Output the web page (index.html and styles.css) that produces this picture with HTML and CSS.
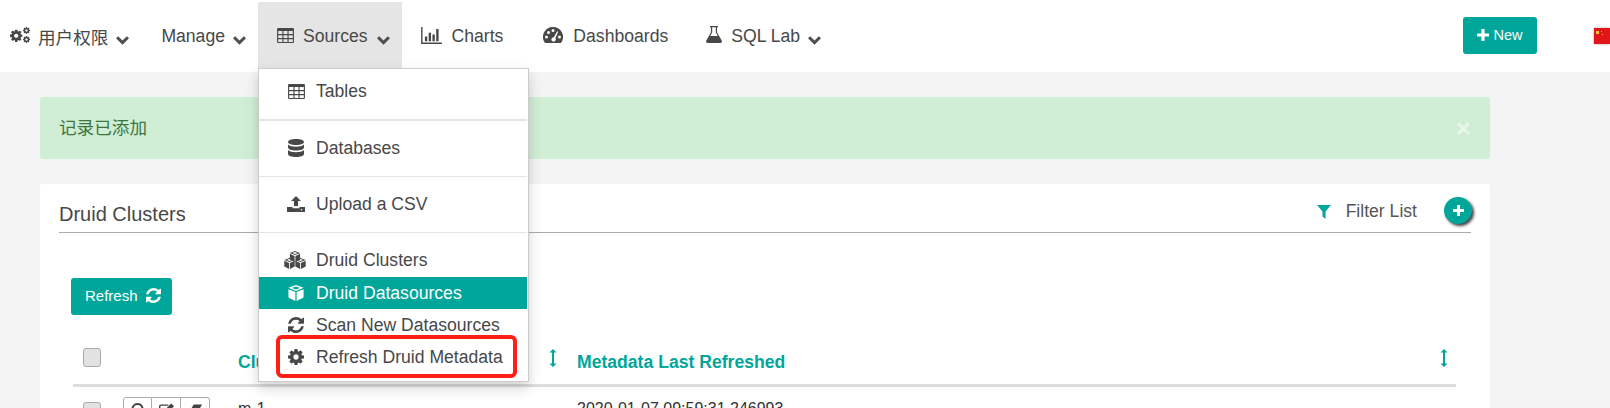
FILE: index.html
```html
<!DOCTYPE html>
<html lang="zh">
<head>
<meta charset="utf-8">
<title>Druid Clusters</title>
<link rel="stylesheet" href="styles.css">
</head>
<body>
<svg class="sprite" xmlns="http://www.w3.org/2000/svg">
  <defs>
    <symbol id="i-cog" viewBox="128 128 1536 1536"><path d="M1152 896q0-106-75-181t-181-75-181 75-75 181 75 181 181 75 181-75 75-181zm512-109v222q0 12-8 23t-20 13l-185 28q-19 54-39 91 35 50 107 138 10 12 10 25t-9 23q-27 37-99 108t-94 71q-12 0-26-9l-138-108q-44 23-91 38-16 136-29 186-7 28-36 28h-222q-14 0-24.5-8.5t-11.5-21.5l-28-184q-49-16-90-37l-141 107q-10 9-25 9-14 0-25-11-126-114-165-168-7-10-7-23 0-12 8-23 15-21 51-66.5t54-70.5q-27-50-41-99l-183-27q-13-2-21-12.5t-8-23.5v-222q0-12 8-23t19-13l186-28q14-46 39-92-40-57-107-138-10-12-10-24 0-10 9-23 26-36 98.5-107.5t94.5-71.5q13 0 26 10l138 107q44-23 91-38 16-136 29-186 7-28 36-28h222q14 0 24.5 8.5t11.5 21.5l28 184q49 16 90 37l142-107q9-9 24-9 13 0 25 10 129 119 165 170 7 8 7 22 0 12-8 23-15 21-51 66.5t-54 70.5q26 50 41 98l183 28q13 2 21 12.5t8 23.5z"/></symbol>
    <symbol id="i-cogs" viewBox="0 0 20 16">
      <use href="#i-cog" x="0" y="2.500" width="12.500" height="12.500"/>
      <use href="#i-cog" x="13" y="0" width="7" height="7"/>
      <use href="#i-cog" x="13" y="9" width="7" height="7"/>
    </symbol>
    <symbol id="i-refresh" viewBox="128 128 1536 1536"><path d="M1639 1056q0 5-1 7-64 268-268 434.5t-478 166.5q-146 0-282.5-55t-243.5-157l-129 129q-19 19-45 19t-45-19-19-45v-448q0-26 19-45t45-19h448q26 0 45 19t19 45-19 45l-137 137q71 66 161 102t187 36q134 0 250-65t186-179q11-17 53-117 8-23 30-23h192q13 0 22.5 9.500t9.500 22.500zm25-800v448q0 26-19 45t-45 19h-448q-26 0-45-19t-19-45 19-45l138-138q-148-137-349-137-134 0-250 65t-186 179q-11 17-53 117-8 23-30 23h-199q-13 0-22.500-9.500t-9.500-22.500v-7q65-268 270-434.500t480-166.500q146 0 284 55.500t245 156.500l130-129q19-19 45-19t45 19 19 45z"/></symbol>
    <symbol id="i-table" viewBox="0 0 18 16"><path fill-rule="evenodd" d="M1.200 0h15.600A1.200 1.200 0 0 1 18 1.200v13.600a1.200 1.200 0 0 1-1.200 1.200H1.200A1.200 1.200 0 0 1 0 14.800V1.200A1.200 1.200 0 0 1 1.200 0zM1.200 3.200v3.200h4.500V3.200zm5.700 0v3.200h4.200V3.200zm5.400 0v3.200h4.500V3.200zM1.200 7.600v3.100h4.500V7.600zm5.700 0v3.100h4.200V7.600zm5.400 0v3.100h4.500V7.600zM1.200 11.900v2.900h4.500v-2.900zm5.700 0v2.900h4.200v-2.900zm5.400 0v2.900h4.500v-2.900z"/></symbol>
    <symbol id="i-chart" viewBox="0 0 22 18"><path d="M0 0h1.500v16.500H22V18H0zM4 10h2.500v5H4zM8 6h2.500v9H8zM12 8h2.500v7H12zM16 2h2.500v13H16z"/></symbol>
    <symbol id="i-dash" viewBox="0 0 20 18"><path fill-rule="evenodd" d="M10 1a10 10 0 0 1 8.600 15.100 1.500 1.500 0 0 1-1.300.9H2.700a1.500 1.500 0 0 1-1.300-.9A10 10 0 0 1 10 1zM10 3a1.500 1.500 0 1 0 0 3 1.500 1.500 0 0 0 0-3zM5.500 5a1.500 1.500 0 1 0 0 3 1.500 1.500 0 0 0 0-3zM3.500 9.500a1.500 1.500 0 1 0 0 3 1.500 1.500 0 0 0 0-3zM16.500 9.500a1.500 1.500 0 1 0 0 3 1.500 1.500 0 0 0 0-3zM14.200 5.300l-3.300 6a2.200 2.200 0 1 0 1.500.9l2.800-6.400z"/></symbol>
    <symbol id="i-flask" viewBox="0 0 16 17"><path fill-rule="evenodd" d="M4 0h8v1.200h-1v5L15.700 14.500A1.700 1.700 0 0 1 14.200 17H1.800A1.700 1.700 0 0 1 .3 14.500L5 6.200v-5H4zM6.200 1.200v5.300L4.200 10h7.600L9.800 6.500V1.200z"/></symbol>
    <symbol id="i-db" viewBox="0 0 16 18"><path d="M8 0c4.400 0 8 1.300 8 3s-3.600 3-8 3-8-1.300-8-3 3.600-3 8-3zM0 5.500C1.500 7 4.600 7.700 8 7.700s6.500-.7 8-2.200V8.500c0 1.700-3.600 3-8 3s-8-1.300-8-3zM0 11c1.500 1.500 4.600 2.200 8 2.200s6.500-.7 8-2.200v4c0 1.700-3.600 3-8 3s-8-1.300-8-3z"/></symbol>
    <symbol id="i-upload" viewBox="0 0 18 16"><path fill-rule="evenodd" d="M9 0l5 5h-3v5H7V5H4zM0 11h5.500v1.200h7V11H18v5H0zM14.500 13a.8.800 0 1 0 0 1.600.8.800 0 0 0 0-1.600z"/></symbol>
    <symbol id="i-cube" viewBox="0 0 18 18"><path fill-rule="evenodd" d="M9 0l8.500 3.200L9 6.700.5 3.200zM9 1.800L4.500 3.300 9 5l4.500-1.700zM.5 4.700L8.300 8v10L.5 14zM17.500 4.700V14l-7.800 4V8z"/></symbol>
    <symbol id="i-cubes" viewBox="0 0 22 18">
      <use href="#i-cube" x="5.500" y="0" width="11" height="11"/>
      <use href="#i-cube" x="0" y="7" width="11" height="11"/>
      <use href="#i-cube" x="11" y="7" width="11" height="11"/>
    </symbol>
    <symbol id="i-filter" viewBox="0 0 14 14"><path d="M0 0h14L8.500 6.500V14L5.500 11.500V6.500z"/></symbol>
    <symbol id="i-plus" viewBox="0 0 12 12"><path d="M4.400 0h3.200v4.400H12v3.200H7.600V12H4.400V7.600H0V4.400h4.400z"/></symbol>
    <symbol id="i-chev" viewBox="0 0 12 8"><path d="M0 2L2 0l4 4 4-4 2 2-6 6z"/></symbol>
    <symbol id="i-sort" viewBox="0 0 8 18"><path d="M4 0l3.500 3.500H5v11h2.500L4 18 .5 14.500H3v-11H.5z"/></symbol>
    <symbol id="i-times" viewBox="0 0 14 14"><path d="M2.500 0L7 4.500 11.500 0 14 2.500 9.500 7l4.500 4.500-2.500 2.500L7 9.500 2.500 14 0 11.500 4.500 7 0 2.500z"/></symbol>
    <symbol id="i-search" viewBox="0 0 14 14"><path fill-rule="evenodd" d="M6 0a6 6 0 0 1 4.800 9.600L14 12.800 12.800 14 9.600 10.800A6 6 0 1 1 6 0zM6 2a4 4 0 1 0 0 8 4 4 0 0 0 0-8z"/></symbol>
    <symbol id="i-edit" viewBox="0 0 16 14"><path fill-rule="evenodd" d="M2 1h8v1.500H2a.5.500 0 0 0-.5.500v8a.5.500 0 0 0 .5.500h8a.5.500 0 0 0 .5-.5V8H12v3a2 2 0 0 1-2 2H2a2 2 0 0 1-2-2V3a2 2 0 0 1 2-2zM13 0l3 3-7 7H6V7z"/></symbol>
    <symbol id="i-eraser" viewBox="0 0 16 14"><path d="M6 1h9l-5 9H1z"/></symbol>
  </defs>
</svg>

<nav class="navbar">
  <div class="nav-item nav-item-first"><svg class="icon icon-cogs"><use href="#i-cogs"/></svg><span class="nav-label nav-label-first">用户权限</span><svg class="chev chev-tight"><use href="#i-chev"/></svg></div>
  <div class="nav-item nav-item-narrow"><span>Manage</span><svg class="chev chev-tight"><use href="#i-chev"/></svg></div>
  <div class="nav-item nav-item-active nav-item-narrow"><svg class="icon nav-icon-table"><use href="#i-table"/></svg><span class="nav-label">Sources</span><svg class="chev"><use href="#i-chev"/></svg></div>
  <div class="nav-item nav-item-plain"><svg class="icon nav-icon-chart"><use href="#i-chart"/></svg><span class="nav-label nav-label-wide">Charts</span></div>
  <div class="nav-item nav-item-dash"><svg class="icon nav-icon-dash"><use href="#i-dash"/></svg><span class="nav-label nav-label-wide">Dashboards</span></div>
  <div class="nav-item nav-item-sql"><svg class="icon nav-icon-flask"><use href="#i-flask"/></svg><span class="nav-label">SQL Lab</span><svg class="chev chev-tight"><use href="#i-chev"/></svg></div>
  <div class="nav-right">
    <button class="btn btn-new"><svg class="icon-plus-new"><use href="#i-plus"/></svg>New</button>
    <div class="flag"><span class="flag-star"></span></div>
  </div>
</nav>

<div class="dropdown">
  <div class="menu-item"><svg class="menu-icon menu-icon-table"><use href="#i-table"/></svg>Tables</div>
  <div class="divider divider-thick"></div>
  <div class="menu-item"><svg class="menu-icon menu-icon-db"><use href="#i-db"/></svg>Databases</div>
  <div class="divider"></div>
  <div class="menu-item"><svg class="menu-icon menu-icon-offset"><use href="#i-upload"/></svg>Upload a CSV</div>
  <div class="divider"></div>
  <div class="menu-item menu-item-spaced"><svg class="menu-icon menu-icon-wide"><use href="#i-cubes"/></svg>Druid Clusters</div>
  <div class="menu-item menu-item-active"><svg class="menu-icon menu-icon-offset"><use href="#i-cube"/></svg>Druid Datasources</div>
  <div class="menu-item"><svg class="menu-icon menu-icon-offset"><use href="#i-refresh"/></svg>Scan New Datasources</div>
  <div class="menu-item"><svg class="menu-icon menu-icon-offset"><use href="#i-cog"/></svg>Refresh Druid Metadata</div>
  <div class="annotation"></div>
</div>

<main class="main">
  <div class="alert">
    <span class="alert-text">记录已添加</span>
    <svg class="alert-close"><use href="#i-times"/></svg>
  </div>
  <section class="card">
    <header class="card-head">
      <h2 class="card-title">Druid Clusters</h2>
      <div class="card-tools">
        <svg class="filter-icon"><use href="#i-filter"/></svg>
        <span class="filter-label">Filter List</span>
        <span class="fab"><svg class="fab-plus"><use href="#i-plus"/></svg></span>
      </div>
    </header>
    <button class="btn btn-refresh">Refresh<svg class="refresh-icon"><use href="#i-refresh"/></svg></button>
    <div class="list">
      <div class="row row-head">
        <span class="checkbox"></span>
        <span></span>
        <span class="col-head col-head-cluster">Cluster<svg class="sort"><use href="#i-sort"/></svg></span>
        <span class="col-head">Metadata Last Refreshed<svg class="sort"><use href="#i-sort"/></svg></span>
      </div>
      <div class="row row-body">
        <span class="checkbox"></span>
        <span class="actions">
          <span class="action"><svg class="action-icon"><use href="#i-search"/></svg></span>
          <span class="action"><svg class="action-icon"><use href="#i-edit"/></svg></span>
          <span class="action"><svg class="action-icon"><use href="#i-eraser"/></svg></span>
        </span>
        <span class="cell">m-1</span>
        <span class="cell">2020-01-07 09:59:31.246993</span>
      </div>
    </div>
  </section>
</main>
</body>
</html>
```
FILE: styles.css
```css
* { box-sizing: border-box; }
html, body { margin: 0; height: 408px; overflow: hidden; }
body {
  position: relative;
  background: #f4f4f4;
  color: #484848;
  font-family: "Liberation Sans", "Noto Sans CJK SC", sans-serif;
  font-size: 17.6px;
}
.sprite { position: absolute; width: 0; height: 0; }
svg { fill: currentColor; display: block; flex: none; }

/* nav */
.navbar {
  display: flex;
  align-items: stretch;
  height: 72px;
  background: #fff;
  padding-top: 2px;
}
.nav-item {
  display: flex;
  align-items: center;
  height: 66px;
  padding: 2px 13px 0 19px;
  white-space: nowrap;
}
.nav-item-first { padding-left: 10px; }
.nav-item-narrow { padding-right: 12px; }
.nav-item-active { background: #e5e5e5; }
.nav-item-plain { padding-right: 13px; }
.nav-item-dash { padding-left: 27px; }
.nav-item-sql { padding-left: 25px; }
.nav-label { margin-left: 9px; }
.nav-label-first { margin-left: 8px; }
.nav-label-wide { margin-left: 10px; }
.icon { color: #484848; }
.icon-cogs { width: 20px; height: 16px; margin-top: -2px; }
.nav-icon-table { width: 17px; height: 15px; margin-top: -2px; }
.nav-icon-chart { width: 21px; height: 17px; margin-top: -2px; }
.nav-icon-dash { width: 20px; height: 18px; margin-top: -2px; }
.nav-icon-flask { width: 16px; height: 17px; margin-top: -3px; }
.chev { width: 13px; height: 9px; margin: 8px 0 0 9px; color: #4f4f4f; }
.chev-tight { margin-left: 8px; }
.nav-right {
  margin-left: auto;
  display: flex;
  align-items: flex-start;
  padding-top: 15px;
  width: 147px;
  flex: none;
}
.btn {
  display: flex;
  align-items: center;
  border: 0;
  border-radius: 3px;
  background: #00a699;
  color: #fff;
  font-family: inherit;
}
.btn-new {
  width: 74px;
  height: 37px;
  justify-content: center;
  padding-bottom: 2px;
  font-size: 14.5px;
}
.icon-plus-new { width: 12px; height: 12px; margin-right: 4px; }
.flag {
  margin: 11px 0 0 57px;
  width: 16px;
  height: 16px;
  flex: none;
  background: #e0161b;
  box-shadow: 0 0 2px rgba(0,0,0,.4);
  position: relative;
}
.flag-star {
  display: block;
  position: absolute;
  left: 2px;
  top: 3px;
  width: 3px;
  height: 3px;
  background: #f2c230;
  box-shadow: 4px -1px 0 -1px #f2c230, 5px 2px 0 -1px #f2c230;
}

/* dropdown */
.dropdown {
  position: absolute;
  left: 258px;
  top: 68px;
  width: 271px;
  height: 314px;
  padding: 6px 1px 5px 0;
  background: #fff;
  border: 1px solid #ccc;
  box-shadow: 0 6px 12px rgba(0,0,0,.175);
  z-index: 5;
}
.menu-item {
  display: flex;
  align-items: center;
  height: 32px;
  padding-left: 27px;
  color: #484848;
  white-space: nowrap;
}
.menu-item-spaced { margin-bottom: 1px; }
.menu-item-active { background: #00a699; color: #fff; }
.menu-icon { width: 18px; height: 16px; margin-right: 12px; }
.menu-icon-offset { margin: 0 11px 0 1px; }
.menu-icon-table { width: 17px; height: 15px; margin: 0 11px 0 2px; }
.menu-icon-db { width: 16px; height: 18px; margin: 0 12px 0 2px; }
.menu-icon-wide { width: 22px; height: 18px; margin: 0 10px 0 -2px; }
.divider { height: 1px; background: #e5e5e5; margin: 12px 0 11px; }
.divider-thick { height: 2px; margin: 12px 0 11px; }
.annotation {
  position: absolute;
  left: 17px;
  top: 266px;
  width: 241px;
  height: 43px;
  border: 4px solid #ff1f14;
  border-radius: 6px;
}

/* main */
.main { padding: 25px 120px 0 40px; }
.alert {
  display: flex;
  align-items: center;
  justify-content: space-between;
  height: 62px;
  padding: 0 19px;
  border-radius: 3px;
  background: #d0eed6;
  color: #3c763d;
}
.alert-text { margin-bottom: 4px; }
.alert-close { width: 13px; height: 13px; color: #e6f6ea; margin-right: 1px; }
.card {
  margin-top: 25px;
  height: 300px;
  padding: 0 19px;
  background: #fff;
  border-radius: 3px;
}
.card-head {
  display: flex;
  align-items: center;
  justify-content: space-between;
  height: 49px;
  border-bottom: 1px solid #aaa;
}
.card-title {
  margin: 12px 0 0;
  font-size: 20px;
  font-weight: 400;
  color: #484848;
}
.card-tools { display: flex; align-items: center; margin-top: 4px; }
.filter-icon { width: 14px; height: 14px; color: #00a699; margin-top: 4px; }
.filter-label { margin: 2px 27px 0 15px; font-size: 17.6px; color: #555; }
.fab {
  display: flex;
  align-items: center;
  justify-content: center;
  width: 28px;
  height: 27px;
  margin: 1px -1px 0 0;
  border-radius: 50%;
  background: #00a699;
  box-shadow: 2px 2px 3px rgba(0,0,0,.75);
  color: #fff;
}
.fab-plus { width: 11px; height: 11px; }
.btn-refresh {
  margin: 45px 0 0 12px;
  width: 101px;
  height: 37px;
  padding: 0 14px 2px;
  font-size: 15px;
}
.refresh-icon { width: 15px; height: 15px; margin-left: 8px; }

/* list */
.list { margin: 0 15px 0 14px; }
.row {
  display: grid;
  grid-template-columns: 50px 115px 339px 1fr;
}
.row-head {
  height: 72px;
  border-bottom: 3px solid #ddd;
}
.checkbox {
  display: block;
  width: 18px;
  height: 19px;
  margin-left: 10px;
  background: #e2e2e2;
  border: 1px solid #aaa;
  border-radius: 3px;
}
.row-head .checkbox { margin-top: 33px; }
.col-head {
  display: flex;
  justify-content: space-between;
  padding-top: 37px;
  padding-right: 8px;
  color: #00a699;
  font-weight: 700;
  white-space: nowrap;
}
.col-head-cluster { padding-right: 20px; }
.sort { width: 8px; height: 18px; margin-top: -3px; }
.row-body { padding-top: 10px; }
.row-body .checkbox { margin-top: 5px; }
.actions { display: flex; align-self: start; height: 24px; }
.action {
  width: 29px;
  height: 24px;
  padding: 5px 0 0 7px;
  border: 1px solid #aaa;
  border-left-width: 0;
  color: #444;
}
.action:first-child { border-left-width: 1px; border-radius: 3px 0 0 3px; }
.action:last-child { border-radius: 0 3px 3px 0; }
.action-icon { width: 15px; height: 14px; }
.cell { font-size: 16px; color: #333; padding-top: 3px; white-space: nowrap; }
```
